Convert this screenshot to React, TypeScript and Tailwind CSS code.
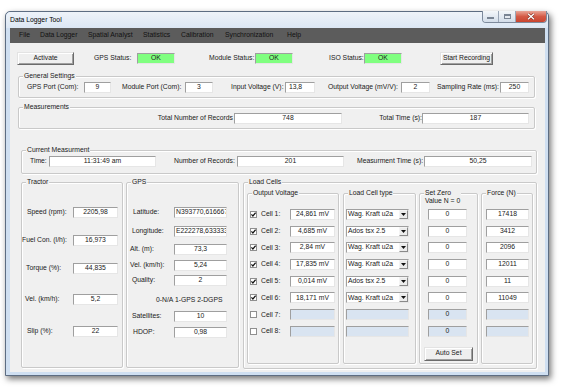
import React from 'react'

type Kids = { className?: string; children?: React.ReactNode }

function Field({ className = '', children, disabled = false, left = false }: Kids & { disabled?: boolean; left?: boolean }) {
  return (
    <div
      className={`h-[11px] shrink-0 border border-t-[#9f9f9f] border-l-[#9f9f9f] border-b-[#e6e6e6] border-r-[#e6e6e6] flex items-center overflow-hidden whitespace-nowrap leading-none ${
        disabled ? 'bg-[#d9e4f1]' : 'bg-white'
      } ${left ? 'justify-start pl-[1px]' : 'justify-center'} ${className}`}
    >
      {children}
    </div>
  )
}

function Button({ className = '', children }: Kids) {
  return (
    <div
      className={`shrink-0 flex items-center justify-center leading-none border border-t-[#e3e3e3] border-l-[#e3e3e3] border-b-[#6b6b6b] border-r-[#6b6b6b] bg-[#efefef] shadow-[inset_1px_1px_0_#fff,inset_-1px_-1px_0_#a0a0a0] ${className}`}
    >
      {children}
    </div>
  )
}

function Group({ title, className = '', children }: Kids & { title: string }) {
  return (
    <div className={`relative shrink-0 border border-[#c9c9c9] rounded-[2px] shadow-[inset_1px_1px_0_#fff,1px_1px_0_#fff] ${className}`}>
      <span className="absolute left-[4px] top-[-5.5px] px-[1px] bg-[#f0f0f0] leading-[8.5px] whitespace-pre">{title}</span>
      {children}
    </div>
  )
}

function Check({ on }: { on: boolean }) {
  return (
    <div className="w-[7px] h-[7px] ml-[2px] shrink-0 border border-[#8f8f8f] bg-white flex items-center justify-center">
      {on && (
        <svg width="5" height="5" viewBox="0 0 5 5">
          <path d="M0.4 2.4 L1.9 4 L4.6 0.7" stroke="#111" strokeWidth="1.2" fill="none" />
        </svg>
      )}
    </div>
  )
}

function Select({ value, disabled = false }: { value: string; disabled?: boolean }) {
  return (
    <div
      className={`w-[63px] h-[11px] ml-[2px] shrink-0 border border-t-[#9f9f9f] border-l-[#9f9f9f] border-b-[#e6e6e6] border-r-[#e6e6e6] flex items-center justify-between overflow-hidden ${
        disabled ? 'bg-[#d9e4f1]' : 'bg-white'
      }`}
    >
      <span className="pl-[1px] leading-none whitespace-nowrap">{value}</span>
      {!disabled && (
        <div className="w-[9px] h-[9px] shrink-0 flex items-center justify-center border border-t-[#f4f4f4] border-l-[#f4f4f4] border-b-[#8a8a8a] border-r-[#8a8a8a] bg-[#ececec]">
          <svg width="5" height="3" viewBox="0 0 5 3">
            <path d="M0 0H5L2.5 3Z" fill="#111" />
          </svg>
        </div>
      )}
    </div>
  )
}

const menu = [
  ['File', 'w-[21px]'],
  ['Data Logger', 'w-[48px]'],
  ['Spatial Analyst', 'w-[55px]'],
  ['Statistics', 'w-[38px]'],
  ['Calibration', 'w-[44px]'],
  ['Synchronization', 'w-[62px]'],
  ['Help', 'w-[30px]'],
]

const tractor = [
  ['Speed (rpm):', '2205,98', 'mt-[24px]', 'pl-[5px]'],
  ['Fuel Con. (l/h):', '16,973', 'mt-[17px]', 'pl-[0px]'],
  ['Torque (%):', '44,835', 'mt-[17px]', 'pl-[4px]'],
  ['Vel. (km/h):', '5,2', 'mt-[20px]', 'pl-[3px]'],
  ['Slip (%):', '22', 'mt-[21px]', 'pl-[5px]'],
]

const cells = [
  ['24,861 mV', 'Wag. Kraft u2a', '17418'],
  ['4,685 mV', 'Ados tsx 2.5', '3412'],
  ['2,84 mV', 'Wag. Kraft u2a', '2096'],
  ['17,835 mV', 'Wag. Kraft u2a', '12011'],
  ['0,014 mV', 'Ados tsx 2.5', '11'],
  ['18,171 mV', 'Wag. Kraft u2a', '11049'],
  ['', '', ''],
  ['', '', ''],
]

function GpsRow({ label, value, mt, pl, left = false }: { label: string; value: string; mt: string; pl: string; left?: boolean }) {
  return (
    <div className={`flex items-center h-[11px] ${mt}`}>
      <div className={`w-[47px] shrink-0 whitespace-nowrap ${pl}`}>{label}</div>
      <Field className="w-[53px]" left={left}>{value}</Field>
    </div>
  )
}

export default function App() {
  return (
    <div className="w-[562px] h-[391px] bg-white overflow-hidden pt-[11px] pl-[5px] font-['Liberation_Sans',Arial,sans-serif] text-[6.8px] text-[#1a1a1a]">
      <div className="w-[544px] h-[365px] flex flex-col rounded-t-[5px] border border-[#5d6d82] bg-[#cfdff1] shadow-[2px_3px_6px_rgba(0,0,0,0.55)]">
        {/* title bar */}
        <div className="h-[16px] shrink-0 flex items-center justify-between rounded-t-[5px] bg-gradient-to-b from-[#eef3f9] to-[#dce7f4] pl-[4px]">
          <span className="leading-none text-black">Data Logger Tool</span>
          <div className="self-start mt-[-1px] mr-[1px] flex h-[12px] rounded-b-[4px] border border-t-0 border-[#7d8a9c] overflow-hidden">
            <div className="w-[16px] flex items-end justify-center pb-[3px] bg-gradient-to-b from-[#f4f7fa] to-[#d3dde9] border-r border-[#9aa6b6]">
              <div className="w-[7px] h-[2px] bg-white border border-[#7a8594]" />
            </div>
            <div className="w-[17px] flex items-center justify-center bg-gradient-to-b from-[#f4f7fa] to-[#d3dde9] border-r border-[#9aa6b6]">
              <div className="w-[7px] h-[5px] border border-[#7a8594] border-t-2 bg-white shadow-[inset_0_0_0_1px_#e4e9ef]" />
            </div>
            <div className="w-[30px] flex items-center justify-center bg-gradient-to-b from-[#e8a597] via-[#d45a46] to-[#c8442f]">
              <svg width="8" height="7" viewBox="0 0 8 7">
                <path d="M1 0.8L7 6.2M7 0.8L1 6.2" stroke="#7a2a1e" strokeWidth="2.4" />
                <path d="M1 0.8L7 6.2M7 0.8L1 6.2" stroke="#fff" strokeWidth="1.4" />
              </svg>
            </div>
          </div>
        </div>

        {/* client */}
        <div className="w-[535px] h-[344px] ml-[4px] shrink-0 flex flex-col bg-[#f0f0f0]">
          <div className="h-[15px] shrink-0 flex items-center bg-[#5c5c5c] pl-[9px] text-[#111]">
            {menu.map(([m, w]) => (
              <span key={m} className={`${w} shrink-0 whitespace-nowrap leading-none`}>{m}</span>
            ))}
          </div>

          {/* status row */}
          <div className="h-[13px] mt-[9px] shrink-0 flex items-center">
            <Button className="ml-[7px] w-[57px] h-[13px]">Activate</Button>
            <span className="ml-[20px] w-[43px] shrink-0">GPS Status:</span>
            <Field className="w-[38px] !bg-[#80ff80]">OK</Field>
            <span className="ml-[34px] w-[46px] shrink-0">Module Status:</span>
            <Field className="w-[38px] !bg-[#80ff80]">OK</Field>
            <span className="ml-[36px] w-[35px] shrink-0">ISO Status:</span>
            <Field className="w-[38px] !bg-[#80ff80]">OK</Field>
            <Button className="ml-[38px] w-[53px] h-[13px] -mt-[1px]">Start Recording</Button>
          </div>

          <Group title="General Settings" className="ml-[8px] mt-[11px] w-[517px] h-[22px]">
            <div className="flex items-center h-[11px] mt-[5px] pl-[8px]">
              <span className="w-[57px] shrink-0 whitespace-nowrap">GPS Port (Com):</span>
              <Field className="w-[27px]">9</Field>
              <span className="ml-[11px] w-[63px] shrink-0 whitespace-nowrap">Module Port (Com):</span>
              <Field className="w-[28px]">3</Field>
              <span className="ml-[18px] w-[54px] shrink-0 whitespace-nowrap">Input Voltage (V):</span>
              <Field className="w-[30px]" left>&nbsp;13,8</Field>
              <span className="ml-[13px] w-[73px] shrink-0 whitespace-nowrap">Output Voltage (mV/V):</span>
              <Field className="w-[29px]">2</Field>
              <span className="ml-[7px] w-[63px] shrink-0 whitespace-nowrap">Sampling Rate (ms):</span>
              <Field className="w-[29px]">250</Field>
            </div>
          </Group>

          <Group title="Measurements" className="ml-[8px] mt-[9px] w-[517px] h-[22px]">
            <div className="flex items-center h-[11px] mt-[5px]">
              <span className="w-[215px] shrink-0 text-right pr-[1px] whitespace-nowrap">Total Number of Records</span>
              <Field className="w-[108px]">748</Field>
              <span className="w-[80px] shrink-0 text-right whitespace-nowrap">Total Time (s):</span>
              <Field className="w-[107px]">187</Field>
            </div>
          </Group>

          <Group title="Current Measurment" className="ml-[11px] mt-[21px] w-[516px] h-[24px]">
            <div className="flex items-center h-[11px] mt-[5px] pl-[8px]">
              <span className="w-[19px] shrink-0">Time:</span>
              <Field className="w-[107px]">11:31:49 am</Field>
              <span className="ml-[18px] w-[63px] shrink-0 whitespace-nowrap">Number of Records:</span>
              <Field className="w-[107px]">201</Field>
              <span className="ml-[13px] w-[67px] shrink-0 whitespace-nowrap">Measurment Time (s):</span>
              <Field className="w-[108px]">50,25</Field>
            </div>
          </Group>

          <div className="mt-[8px] flex items-start">
            <Group title="Tractor" className="ml-[11px] w-[102px] h-[186px]">
              <div className="flex flex-col">
                {tractor.map(([l, v, mt, pl]) => (
                  <div key={l} className={`flex items-center h-[11px] ${mt}`}>
                    <div className={`w-[51px] shrink-0 whitespace-nowrap ${pl}`}>{l}</div>
                    <Field className="w-[45px]">{v}</Field>
                  </div>
                ))}
              </div>
            </Group>

            <Group title="GPS" className="ml-[3px] w-[113px] h-[186px]">
              <div className="flex flex-col">
                <GpsRow label="Latitude:" value="N393770,616667" mt="mt-[24px]" pl="pl-[6px]" left />
                <GpsRow label="Longitude:" value="E222278,633333" mt="mt-[8px]" pl="pl-[5px]" left />
                <GpsRow label="Alt. (m):" value="73,3" mt="mt-[7px]" pl="pl-[3px]" />
                <GpsRow label="Vel. (km/h):" value="5,24" mt="mt-[5px]" pl="pl-[3px]" />
                <GpsRow label="Quality:" value="2" mt="mt-[4px]" pl="pl-[5px]" />
                <div className="mt-[8.5px] h-[9px] leading-[9px] pl-[29px] whitespace-nowrap">0-N/A 1-GPS 2-DGPS</div>
                <GpsRow label="Satellites:" value="10" mt="mt-[7.5px]" pl="pl-[5px]" />
                <GpsRow label="HDOP:" value="0,98" mt="mt-[5px]" pl="pl-[6px]" />
              </div>
            </Group>

            <Group title="Load Cells" className="ml-[4px] w-[294px] h-[187px]">
              <div className="flex items-start mt-[10px]">
                <Group title="Output Voltage" className="ml-[3px] w-[92px] h-[171px]">
                  <div className="flex flex-col gap-[5.7px] pt-[15px]">
                    {cells.map(([v], i) => (
                      <div key={i} className="flex items-center h-[11px]">
                        <Check on={i < 6} />
                        <span className="ml-[4px] w-[29px] shrink-0 whitespace-nowrap">Cell {i + 1}:</span>
                        <Field className="w-[45px]" disabled={i >= 6}>{v}</Field>
                      </div>
                    ))}
                  </div>
                </Group>

                <Group title="Load Cell type" className="ml-[4px] w-[73px] h-[171px]">
                  <div className="flex flex-col gap-[5.7px] pt-[15px]">
                    {cells.map(([, t], i) => (
                      <div key={i} className="flex items-center h-[11px]">
                        <Select value={t} disabled={i >= 6} />
                      </div>
                    ))}
                  </div>
                </Group>

                <Group title={'Set Zero\nValue N = 0'} className="ml-[3px] w-[59px] h-[171px]">
                  <div className="flex flex-col gap-[5.7px] pt-[15px]">
                    {cells.map((_, i) => (
                      <div key={i} className="flex items-center h-[11px]">
                        <Field className="ml-[8px] w-[39px]" disabled={i >= 6}>0</Field>
                      </div>
                    ))}
                  </div>
                  <Button className="ml-[4px] mt-[10px] w-[49px] h-[14px]">Auto Set</Button>
                </Group>

                <Group title="Force (N)" className="ml-[3px] w-[52px] h-[171px]">
                  <div className="flex flex-col gap-[5.7px] pt-[15px]">
                    {cells.map(([, , f], i) => (
                      <div key={i} className="flex items-center h-[11px]">
                        <Field className="ml-[4px] w-[43px]" disabled={i >= 6}>{f}</Field>
                      </div>
                    ))}
                  </div>
                </Group>
              </div>
            </Group>
          </div>
        </div>
      </div>
    </div>
  )
}
